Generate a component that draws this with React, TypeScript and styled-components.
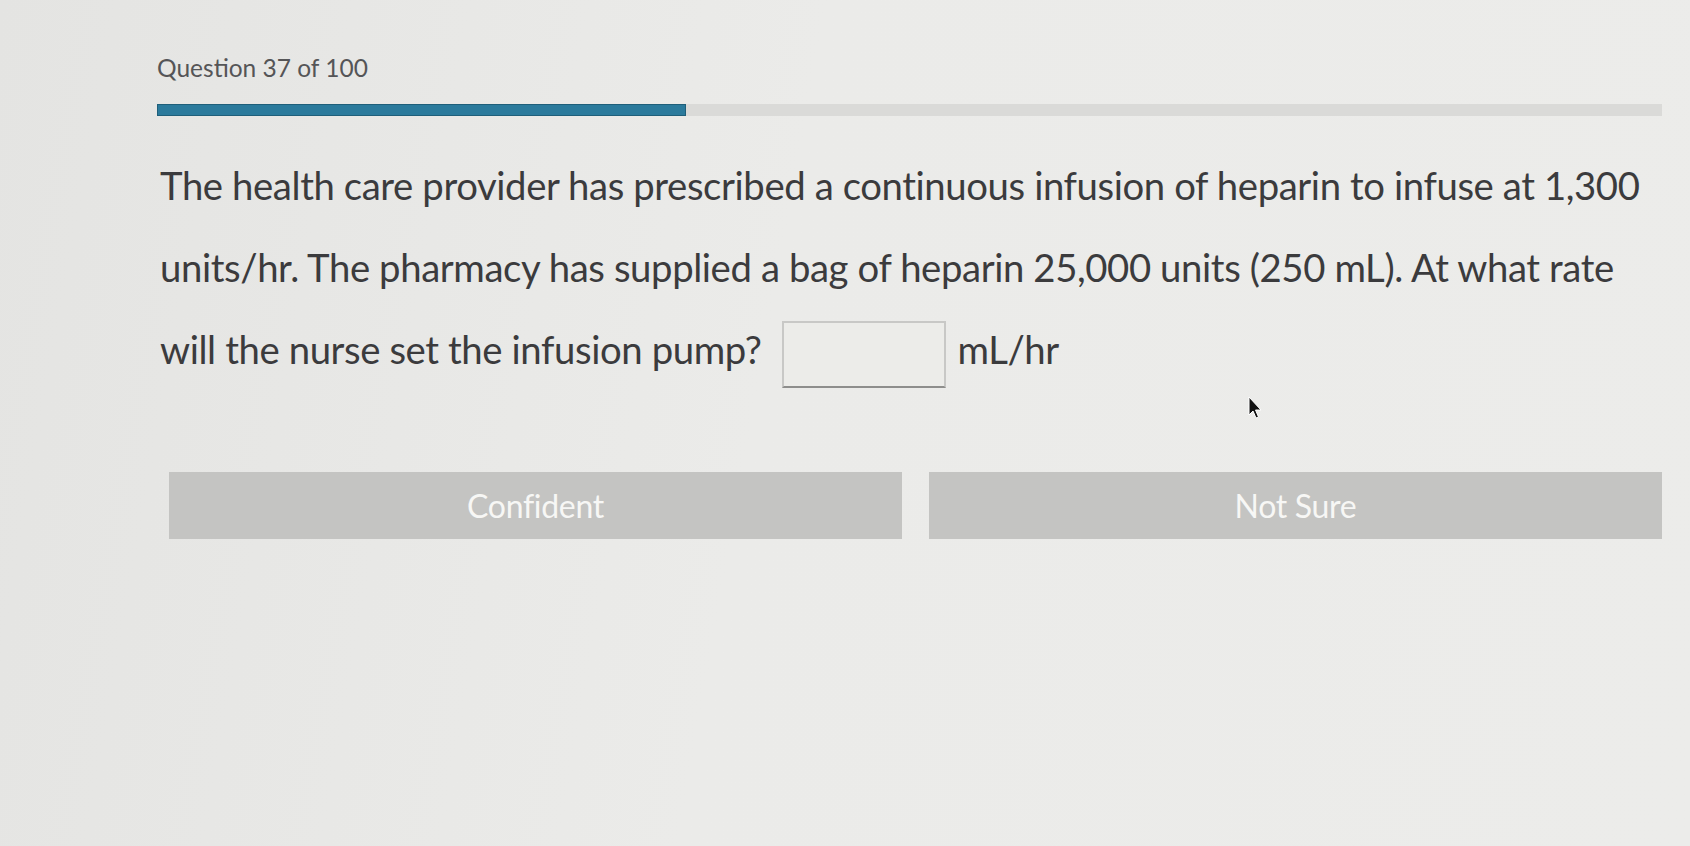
import React from "react";
import styled, { createGlobalStyle } from "styled-components";

const Global = createGlobalStyle`
  html, body { margin: 0; padding: 0; background: #e8e8e6; }
  body { font-family: Lato, "Open Sans", "Noto Sans", sans-serif; }
`;

const Page = styled.div`
  position: relative;
  min-height: 846px;
  box-sizing: border-box;
  padding: 52px 28px 0 157px;
  background: linear-gradient(100deg, #e4e4e2 0%, #ebebe9 45%, #ececea 100%);
  display: flex;
  flex-direction: column;
`;

const Counter = styled.div`
  font-size: 24.5px;
  line-height: 32px;
  color: #555557;
`;

const Track = styled.div`
  margin-top: 20px;
  height: 12px;
  background: #dadad8;
  display: flex;
`;

const Fill = styled.div`
  height: 100%;
  background: #2b7a9c;
  border: 1px solid #1f5f7a;
  box-sizing: border-box;
`;

const Prompt = styled.p`
  margin: 28px 0 0 3px;
  font-size: 38.3px;
  line-height: 82px;
  color: #3b3b3d;
  letter-spacing: -0.4px;
  white-space: nowrap;
`;

const Answer = styled.input`
  display: inline-block;
  vertical-align: middle;
  width: 164px;
  height: 67px;
  box-sizing: border-box;
  margin: 0 11px 0 21px;
  border: 2px solid #c8c8c6;
  border-bottom-color: #8e8e8c;
  background: #ecece9;
  outline: none;
`;

const Buttons = styled.div`
  margin-top: 82px;
  display: grid;
  grid-template-columns: 1fr 1fr;
  gap: 27px;
  padding-left: 12px;
`;

const Choice = styled.button`
  height: 67px;
  border: none;
  background: #c4c4c2;
  color: #f7f7f5;
  font-family: Lato, "Open Sans", sans-serif;
  font-size: 32px;
  letter-spacing: -0.3px;
  cursor: pointer;
`;

const Pointer = styled.svg`
  position: absolute;
  left: 1248px;
  top: 396px;
`;

export default function App() {
  const progress = 37 / 100;
  return (
    <>
      <Global />
      <Page>
        <Counter>Question 37 of 100</Counter>
        <Track>
          <Fill style={{ width: `${progress * 95}%` }} />
        </Track>
        <Prompt>
          The health care provider has prescribed a continuous infusion of heparin to infuse at 1,300
          <br />
          units/hr. The pharmacy has supplied a bag of heparin 25,000 units (250 mL). At what rate
          <br />
          will the nurse set the infusion pump?
          <Answer type="text" aria-label="answer" />
          mL/hr
        </Prompt>
        <Buttons>
          <Choice>Confident</Choice>
          <Choice>Not Sure</Choice>
        </Buttons>
        <Pointer width="14" height="24" viewBox="0 0 14 24">
          <path d="M1 1 L1 19 L5 15 L8 22 L10.5 21 L7.5 14 L13 14 Z" fill="#111" stroke="#fff" strokeWidth="1" />
        </Pointer>
      </Page>
    </>
  );
}
